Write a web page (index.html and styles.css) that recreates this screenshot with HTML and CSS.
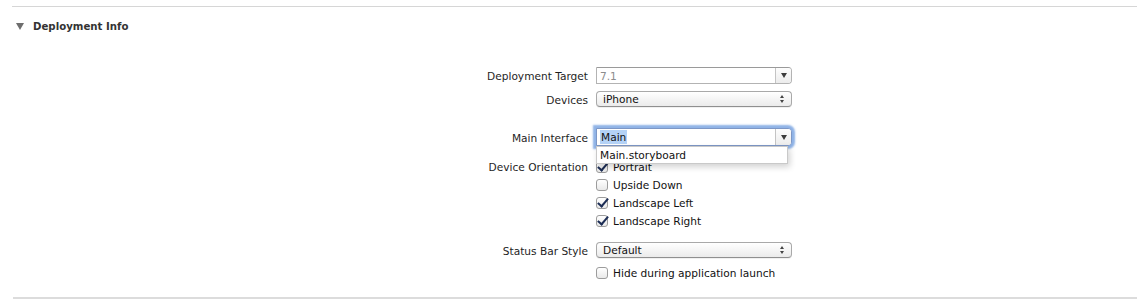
FILE: index.html
```html
<!DOCTYPE html>
<html lang="en">
<head>
    <meta charset="UTF-8">
    <title>Deployment Info</title>
    <link rel="stylesheet" href="styles.css">
</head>
<body>
    <section class="section">
        <header class="section-header">
            <span class="disclosure"></span>
            <h2 class="section-title">Deployment Info</h2>
        </header>

        <div class="form">
            <div class="row row-target">
                <label class="row-label">Deployment Target</label>
                <div class="combo">
                    <span class="combo-text muted">7.1</span>
                    <span class="combo-btn"><span class="arrow-down"></span></span>
                </div>
            </div>

            <div class="row row-devices">
                <label class="row-label">Devices</label>
                <div class="popup">
                    <span class="popup-text">iPhone</span>
                    <span class="updown"><span class="up"></span><span class="down"></span></span>
                </div>
            </div>

            <div class="row row-main">
                <label class="row-label">Main Interface</label>
                <div class="combo combo-focus">
                    <span class="combo-text"><span class="selected">Main</span></span>
                    <span class="combo-btn"><span class="arrow-down"></span></span>
                    <!-- autocomplete list -->
                    <div class="completion">Main.storyboard</div>
                </div>
            </div>

            <div class="row row-orient">
                <label class="row-label">Device Orientation</label>
                <div class="checks">
                    <div class="check on"><span class="box"></span>Portrait</div>
                    <div class="check"><span class="box"></span>Upside Down</div>
                    <div class="check on"><span class="box"></span>Landscape Left</div>
                    <div class="check on"><span class="box"></span>Landscape Right</div>
                </div>
            </div>

            <div class="row row-status">
                <label class="row-label">Status Bar Style</label>
                <div class="popup">
                    <span class="popup-text">Default</span>
                    <span class="updown"><span class="up"></span><span class="down"></span></span>
                </div>
            </div>

            <div class="row row-hide">
                <span class="row-label"></span>
                <div class="check"><span class="box"></span>Hide during application launch</div>
            </div>
        </div>

        <div class="section-end"></div>
    </section>
</body>
</html>
```

FILE: styles.css
```css
* {
    margin: 0;
    padding: 0;
    box-sizing: border-box;
}

body {
    font-family: 'DejaVu Sans', 'Liberation Sans', sans-serif;
    font-size: 10.6px;
    color: #222;
    background: #fff;
    overflow: hidden;
}

/* section frame */
.section {
    padding-top: 6px;
}

.section-header {
    margin-left: 12px;
    border-top: 1px solid #d6d6d6;
    height: 40px;
    display: flex;
    align-items: center;
    padding-left: 4px;
    padding-bottom: 1px;
}

.disclosure {
    width: 0;
    height: 0;
    border-left: 4px solid transparent;
    border-right: 4px solid transparent;
    border-top: 7px solid #6e6e6e;
    margin-right: 9px;
}

.section-title {
    font-size: 10.2px;
    font-weight: bold;
    color: #333;
}

.section-end {
    margin-left: 13px;
    margin-top: 15px;
    border-top: 2px solid #dcdcdc;
}

/* form rows */
.form {
    padding-top: 21px;
}

.row {
    display: flex;
    align-items: center;
}

.row-label {
    width: 596px;
    padding-right: 8px;
    padding-top: 1px;
    text-align: right;
    color: #1e1e1e;
}

.row-devices { margin-top: 7px; }
.row-main { margin-top: 21px; }
.row-orient { margin-top: 12px; align-items: flex-start; }
.row-orient .row-label { padding-top: 3px; }
.row-status { margin-top: 12px; }
.row-hide { margin-top: 6px; }

/* combo box */
.combo {
    position: relative;
    width: 196px;
    height: 17px;
    display: flex;
    border: 1px solid #b3b3b3;
    border-top-color: #9a9a9a;
    border-radius: 0 4px 4px 0;
    background: #fff;
}

.combo-text {
    flex: 1;
    padding-left: 3px;
    padding-top: 1px;
    line-height: 15px;
}

.muted {
    color: #8c8c8c;
}

.combo-btn {
    width: 16px;
    border-left: 1px solid #c4c4c4;
    border-radius: 0 3px 3px 0;
    background: linear-gradient(#fdfdfd, #ececec);
    display: flex;
    align-items: center;
    justify-content: center;
}

.arrow-down {
    width: 0;
    height: 0;
    border-left: 3.5px solid transparent;
    border-right: 3.5px solid transparent;
    border-top: 5px solid #3c3c3c;
}

.combo-focus {
    height: 18px;
    border-color: #7d97c6;
    box-shadow: 0 0 0 1px #8fb3e6, 0 0 2px 3px rgba(104, 152, 222, 0.75);
}

.combo-focus .combo-text {
    line-height: 16px;
    padding-top: 0;
}

.selected {
    background: #b4d2f6;
    padding: 1px 1px;
    color: #111;
}

.completion {
    position: absolute;
    top: 17px;
    left: -1px;
    width: 192px;
    height: 18px;
    line-height: 17px;
    padding-left: 3px;
    background: #fff;
    border: 1px solid #c9c9c9;
    box-shadow: 2px 3px 6px rgba(0, 0, 0, 0.18);
    color: #111;
    z-index: 10;
}

/* popup button */
.popup {
    width: 196px;
    height: 16px;
    display: flex;
    align-items: center;
    border: 1px solid #a9a9a9;
    border-bottom-color: #8f8f8f;
    border-radius: 4px;
    background: linear-gradient(#ffffff, #f3f3f3 60%, #ebebeb);
    box-shadow: 0 1px 0 rgba(0, 0, 0, 0.06);
}

.popup-text {
    flex: 1;
    padding-left: 6px;
    padding-top: 1px;
    line-height: 13px;
    color: #111;
}

.updown {
    width: 14px;
    display: flex;
    flex-direction: column;
    align-items: center;
    gap: 2px;
    margin-right: 2px;
}

.up,
.down {
    width: 0;
    height: 0;
    border-left: 2.5px solid transparent;
    border-right: 2.5px solid transparent;
}

.up { border-bottom: 3px solid #444; }
.down { border-top: 3px solid #444; }

/* checkboxes */
.checks {
    display: flex;
    flex-direction: column;
}

.check {
    height: 18px;
    display: flex;
    align-items: center;
    color: #111;
}

.check .box {
    position: relative;
    width: 12px;
    height: 12px;
    margin-right: 5px;
    border: 1px solid #9c9c9c;
    border-radius: 3px;
    background: linear-gradient(#ffffff, #e9e9e9);
}

.check.on .box::after {
    content: "";
    position: absolute;
    left: 3px;
    top: -2px;
    width: 4px;
    height: 9px;
    border-right: 2.5px solid #1c2d55;
    border-bottom: 2.5px solid #1c2d55;
    transform: rotate(40deg);
}
```
